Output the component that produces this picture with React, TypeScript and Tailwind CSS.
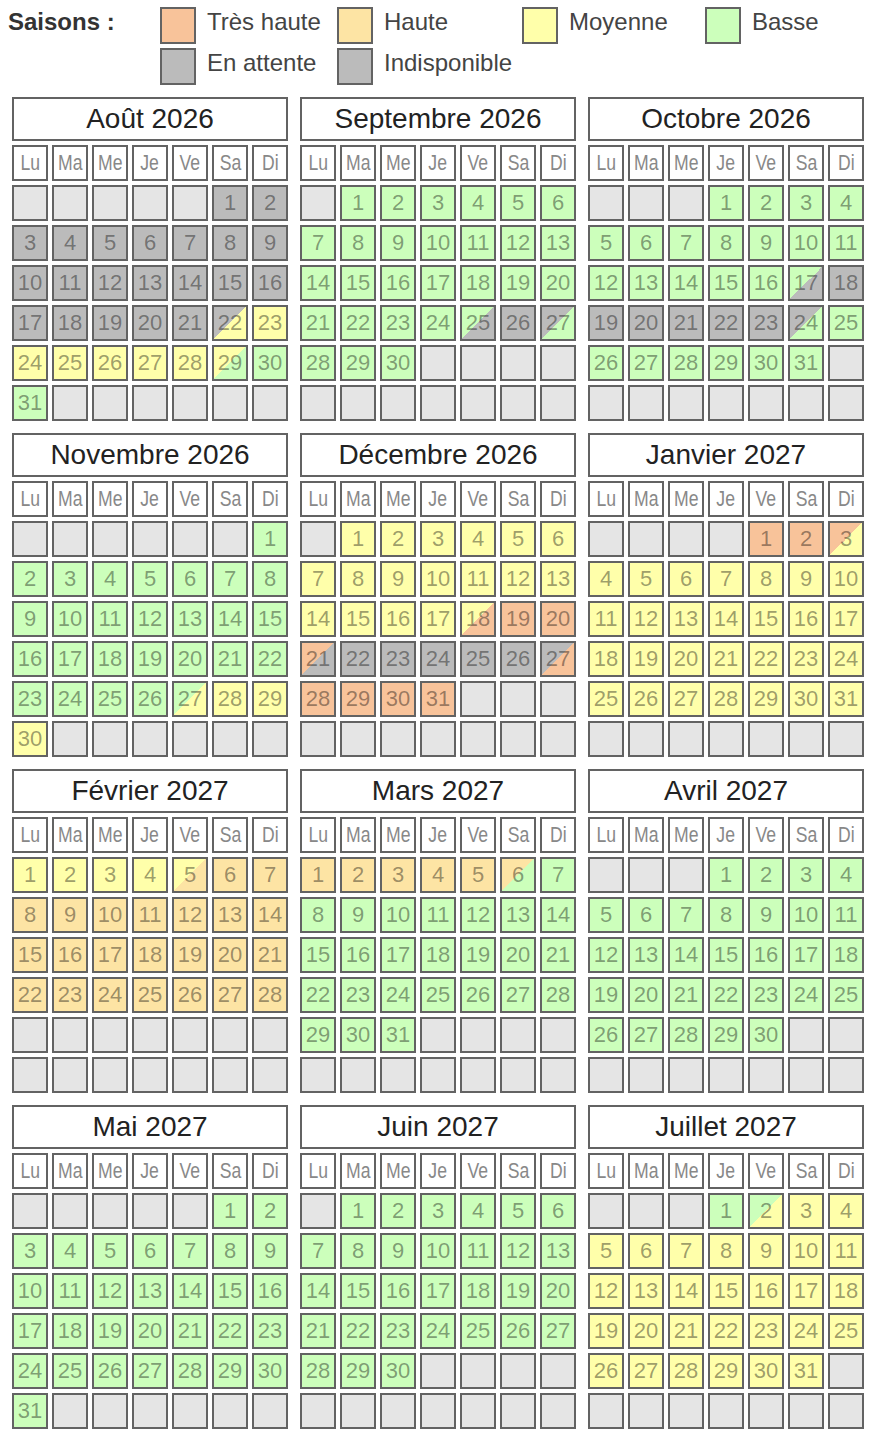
import React from "react";

type State = string;

const single: Record<string, string> = {
  E: "bg-[#e5e5e5]",
  G: "bg-[#bbbbbb]",
  T: "bg-[#f8c39a]",
  H: "bg-[#fde4a4]",
  M: "bg-[#ffffaa]",
  B: "bg-[#ccffbb]",
  GM: "bg-[linear-gradient(to_bottom_right,#bbbbbb_50%,#ffffaa_50%)]",
  MB: "bg-[linear-gradient(to_bottom_right,#ffffaa_50%,#ccffbb_50%)]",
  BG: "bg-[linear-gradient(to_bottom_right,#ccffbb_50%,#bbbbbb_50%)]",
  GB: "bg-[linear-gradient(to_bottom_right,#bbbbbb_50%,#ccffbb_50%)]",
  BM: "bg-[linear-gradient(to_bottom_right,#ccffbb_50%,#ffffaa_50%)]",
  MT: "bg-[linear-gradient(to_bottom_right,#ffffaa_50%,#f8c39a_50%)]",
  TG: "bg-[linear-gradient(to_bottom_right,#f8c39a_50%,#bbbbbb_50%)]",
  GT: "bg-[linear-gradient(to_bottom_right,#bbbbbb_50%,#f8c39a_50%)]",
  TM: "bg-[linear-gradient(to_bottom_right,#f8c39a_50%,#ffffaa_50%)]",
  MH: "bg-[linear-gradient(to_bottom_right,#ffffaa_50%,#fde4a4_50%)]",
  HB: "bg-[linear-gradient(to_bottom_right,#fde4a4_50%,#ccffbb_50%)]",
};

type Range = [number, number, State];

interface Month {
  name: string;
  offset: number;
  days: number;
  ranges: Range[];
}

const months: Month[] = [
  { name: "Août 2026", offset: 5, days: 31, ranges: [[1, 21, "G"], [22, 22, "GM"], [23, 28, "M"], [29, 29, "MB"], [30, 31, "B"]] },
  { name: "Septembre 2026", offset: 1, days: 30, ranges: [[1, 24, "B"], [25, 25, "BG"], [26, 26, "G"], [27, 27, "GB"], [28, 30, "B"]] },
  { name: "Octobre 2026", offset: 3, days: 31, ranges: [[1, 16, "B"], [17, 17, "BG"], [18, 23, "G"], [24, 24, "GB"], [25, 31, "B"]] },
  { name: "Novembre 2026", offset: 6, days: 30, ranges: [[1, 26, "B"], [27, 27, "BM"], [28, 30, "M"]] },
  { name: "Décembre 2026", offset: 1, days: 31, ranges: [[1, 17, "M"], [18, 18, "MT"], [19, 20, "T"], [21, 21, "TG"], [22, 26, "G"], [27, 27, "GT"], [28, 31, "T"]] },
  { name: "Janvier 2027", offset: 4, days: 31, ranges: [[1, 2, "T"], [3, 3, "TM"], [4, 31, "M"]] },
  { name: "Février 2027", offset: 0, days: 28, ranges: [[1, 4, "M"], [5, 5, "MH"], [6, 28, "H"]] },
  { name: "Mars 2027", offset: 0, days: 31, ranges: [[1, 5, "H"], [6, 6, "HB"], [7, 31, "B"]] },
  { name: "Avril 2027", offset: 3, days: 30, ranges: [[1, 30, "B"]] },
  { name: "Mai 2027", offset: 5, days: 31, ranges: [[1, 31, "B"]] },
  { name: "Juin 2027", offset: 1, days: 30, ranges: [[1, 30, "B"]] },
  { name: "Juillet 2027", offset: 3, days: 31, ranges: [[1, 1, "B"], [2, 2, "BM"], [3, 31, "M"]] },
];

const dayNames = ["Lu", "Ma", "Me", "Je", "Ve", "Sa", "Di"];

function stateOf(m: Month, d: number): State {
  for (const [a, b, s] of m.ranges) if (d >= a && d <= b) return s;
  return "E";
}

function MonthBlock({ m }: { m: Month }) {
  const cells: { day: number | null; state: State }[] = [];
  for (let i = 0; i < 42; i++) {
    const d = i - m.offset + 1;
    if (d >= 1 && d <= m.days) cells.push({ day: d, state: stateOf(m, d) });
    else cells.push({ day: null, state: "E" });
  }
  return (
    <div className="flex flex-col">
      <div className="h-[44px] border-2 border-[#636363] bg-white flex items-center justify-center text-[28px] text-[#222] leading-none">
        {m.name}
      </div>
      <div className="grid grid-cols-7 gap-1 mt-1">
        {dayNames.map((n) => (
          <div
            key={n}
            className="h-9 border-2 border-[#636363] bg-white flex items-center justify-center text-[22px] text-[#888] leading-none"
          >
            <span className="inline-block scale-x-80">{n}</span>
          </div>
        ))}
        {cells.map((c, i) => (
          <div
            key={i}
            className={`h-9 border-2 border-[#636363] flex items-center justify-center text-[22px] leading-none text-black/40 ${single[c.state]}`}
          >
            {c.day ?? ""}
          </div>
        ))}
      </div>
    </div>
  );
}

function Swatch({ cls, label }: { cls: string; label: string }) {
  return (
    <div className="flex items-start">
      <div className={`w-9 h-[37px] border-2 border-[#636363] shrink-0 ${cls}`} />
      <span className="ml-[11px] text-[24px] leading-[28px] text-[#444] mt-[1px]">{label}</span>
    </div>
  );
}

export default function App() {
  return (
    <div className="w-[876px] bg-white font-['Liberation_Sans',Arial,sans-serif] pb-3">
      <div className="grid grid-cols-[160px_177px_185px_183px_1fr] gap-y-1 pt-[7px]">
        <div className="pl-2 font-bold text-[24px] leading-[28px] text-[#333] mt-[1px]">Saisons :</div>
        <Swatch cls="bg-[#f8c39a]" label="Très haute" />
        <Swatch cls="bg-[#fde4a4]" label="Haute" />
        <Swatch cls="bg-[#ffffaa]" label="Moyenne" />
        <Swatch cls="bg-[#ccffbb]" label="Basse" />
        <div />
        <Swatch cls="bg-[#bbbbbb]" label="En attente" />
        <Swatch cls="bg-[#bbbbbb]" label="Indisponible" />
      </div>
      <div className="grid grid-cols-[276px_276px_276px] gap-3 px-3 mt-3">
        {months.map((m) => (
          <MonthBlock key={m.name} m={m} />
        ))}
      </div>
    </div>
  );
}
